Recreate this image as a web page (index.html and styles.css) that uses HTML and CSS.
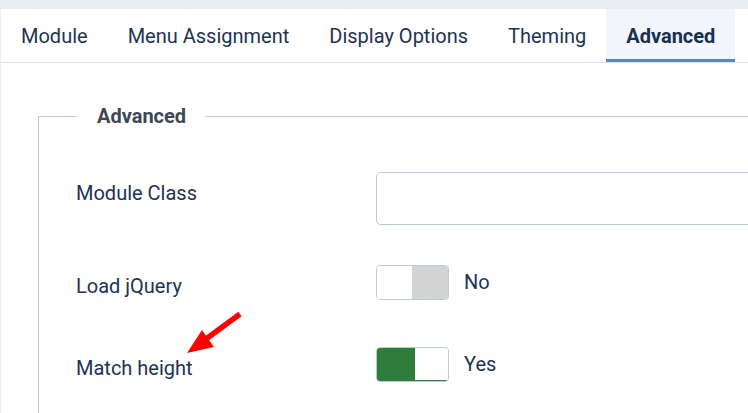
FILE: index.html
```html
<!DOCTYPE html>
<html lang="en">
<head>
<meta charset="utf-8">
<title>Module - Advanced</title>
<link rel="stylesheet" href="styles.css">
</head>
<body>
<div class="panel">
  <div class="tabs">
    <div class="tab">Module</div>
    <div class="tab">Menu Assignment</div>
    <div class="tab">Display Options</div>
    <div class="tab">Theming</div>
    <div class="tab active">Advanced</div>
  </div>
  <div class="tab-content">
    <fieldset class="group">
      <legend class="group-title">Advanced</legend>
      <div class="row">
        <div class="label">Module Class</div>
        <div class="control"><input class="text-input" type="text"></div>
      </div>
      <div class="row row-switch">
        <div class="label">Load jQuery</div>
        <div class="control">
          <span class="switch switch-off"><span class="half half-a"></span><span class="half half-b"></span></span>
          <span class="state">No</span>
        </div>
      </div>
      <div class="row row-switch">
        <div class="label">Match height</div>
        <div class="control">
          <span class="switch switch-on"><span class="half half-a"></span><span class="half half-b"></span></span>
          <span class="state">Yes</span>
        </div>
      </div>
    </fieldset>
  </div>
</div>
<svg class="arrow" width="748" height="413" viewBox="0 0 748 413">
  <line x1="240" y1="314" x2="206" y2="339" stroke="#ff0000" stroke-width="5.5"/>
  <polygon points="187,353 202,330 214,347" fill="#ff0000"/>
</svg>
</body>
</html>
```
FILE: styles.css
```css
html, body {
  margin: 0;
  padding: 0;
}
body {
  background: #e9eef5;
  font-family: Roboto, "Liberation Sans", sans-serif;
  color: #1d3353;
  width: 748px;
  height: 413px;
  overflow: hidden;
  position: relative;
}
.panel {
  margin: 9px 0 0 1px;
  background: #ffffff;
  height: 404px;
  overflow: hidden;
}
.tabs {
  display: flex;
  border-bottom: 1px solid #dde3eb;
}
.tab {
  font-size: 20px;
  line-height: 24px;
  padding: 15px 20px 11px;
  border-bottom: 3px solid transparent;
  color: #1d3353;
  white-space: nowrap;
}
.tab.active {
  background: #f2f5fa;
  border-bottom-color: #5685c5;
  font-weight: 700;
  color: #18304f;
}
.tab-content {
  padding: 41px 0 0 37px;
}
.group {
  margin: 0;
  border: 1px solid #b9c9e1;
  padding: 44px 0 0 37px;
  width: 900px;
  min-height: 400px;
}
.group-title {
  padding: 0 19px 0 21px;
  font-size: 20px;
  line-height: 24px;
  font-weight: 700;
  color: #3e4753;
}
.row {
  display: grid;
  grid-template-columns: 300px 1fr;
  margin-bottom: 40px;
}
.label {
  font-size: 20px;
  line-height: 25px;
  padding-top: 8.5px;
  color: #1d3353;
}
.control {
  display: flex;
  align-items: flex-start;
}
.row-switch .control {
  min-height: 42px;
}
.text-input {
  box-sizing: border-box;
  width: 600px;
  height: 53px;
  border: 1px solid #b9c8dd;
  border-radius: 5px;
  background: #ffffff;
  margin: 0;
}
.switch {
  box-sizing: border-box;
  display: flex;
  width: 73px;
  height: 35px;
  border: 1px solid #bccadc;
  border-radius: 4px;
  overflow: hidden;
}
.half {
  display: block;
  height: 100%;
}
.switch-off .half-a {
  width: 35px;
  background: #ffffff;
}
.switch-off .half-b {
  flex: 1;
  background: #d3d3d3;
}
.switch-on .half-a {
  width: 38px;
  background: #2e7d3a;
}
.switch-on .half-b {
  flex: 1;
  background: #ffffff;
  box-shadow: inset 0 -1px 0 #2e7d3a;
}
.state {
  margin-left: 15px;
  font-size: 20px;
  line-height: 35px;
  color: #1d3353;
}
.arrow {
  position: absolute;
  left: 0;
  top: 0;
  pointer-events: none;
}
```
